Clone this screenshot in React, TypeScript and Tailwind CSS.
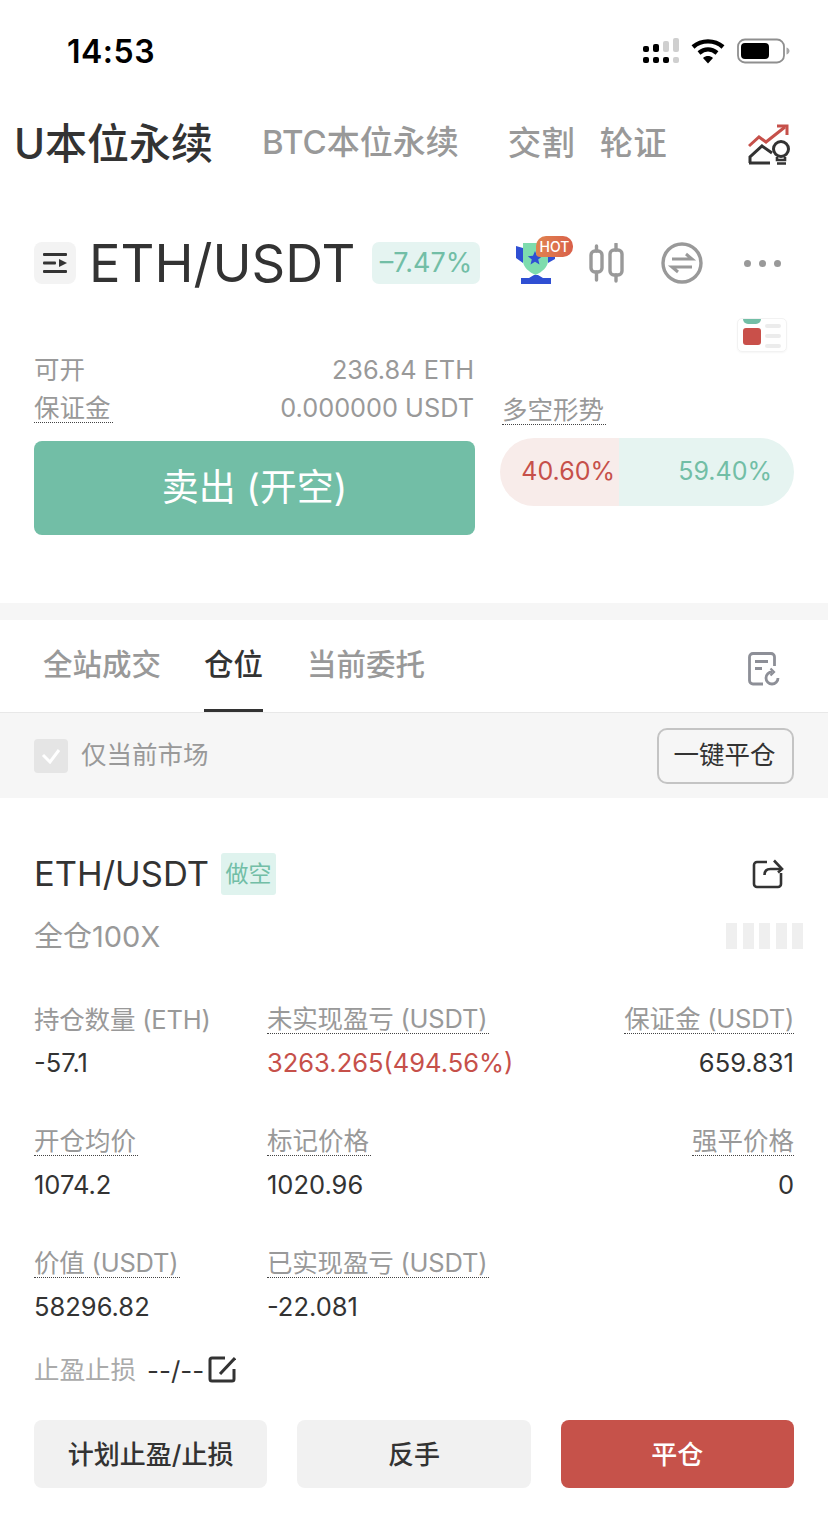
import React from "react";

const font = "font-['Inter','Noto_Sans_CJK_SC',sans-serif]";

function StatusIcons() {
  return (
    <div className="flex items-center">
      <svg width="36" height="26" viewBox="0 0 36 26">
        <g fill="#000">
          <rect x="0" y="8" width="6" height="6" rx="2" />
          <rect x="0" y="19" width="6" height="6" rx="2" />
          <rect x="10" y="6" width="6" height="8" rx="2" />
          <rect x="10" y="19" width="6" height="6" rx="2" />
          <rect x="20" y="19" width="6" height="6" rx="2" />
        </g>
        <g fill="#cfcfcf">
          <rect x="20" y="3" width="6" height="11" rx="2" />
          <rect x="30" y="0" width="6" height="14" rx="2" />
          <rect x="30" y="19" width="6" height="6" rx="2" />
        </g>
      </svg>
      <svg width="34" height="26" viewBox="0 0 34 26" className="ml-[12px]">
        <path d="M2 9C10.500 1.500 23.500 1.500 32 9" fill="none" stroke="#000" strokeWidth="4.400" />
        <path d="M8 15c5.500-4.600 12.500-4.600 18 0" fill="none" stroke="#000" strokeWidth="4.400" />
        <path d="M12 20c3.200-2.600 6.800-2.600 10 0l-5 5.500z" fill="#000" />
      </svg>
      <svg width="54" height="26" viewBox="0 0 54 26" className="ml-[12px]">
        <rect x="1" y="1.500" width="46" height="23" rx="7" fill="none" stroke="#8f8f8f" strokeWidth="1.800" />
        <rect x="4" y="5" width="28" height="16" rx="4" fill="#000" />
        <path d="M49.500 9.500c2 .6 3 2 3 3.500s-1 2.900-3 3.500z" fill="#a8a8a8" />
      </svg>
    </div>
  );
}

function IdeaIcon() {
  return (
    <svg width="46" height="42" viewBox="0 0 46 42" fill="none">
      <path d="M1 22 11 13l7 5L37 3" stroke="#c6504a" strokeWidth="3" />
      <path d="M29 2h10v9" stroke="#c6504a" strokeWidth="3" />
      <path d="M2 39v-6l12-11 10 7" stroke="#333" strokeWidth="3" />
      <path d="M1 39h21" stroke="#333" strokeWidth="3" />
      <circle cx="33" cy="25" r="7.500" stroke="#333" strokeWidth="3" />
      <path d="M29 33v3h8v-3M29 39.500h9" stroke="#333" strokeWidth="2.600" />
    </svg>
  );
}

function Trophy() {
  return (
    <div className="relative mt-[-6px] h-[48px] w-[60px] shrink-0">
      <svg width="40" height="48" viewBox="0 0 40 48" className="absolute left-0 top-0">
        <path d="M0 10l7 2v15l-7-5zM32 27l7-4v-5l-7 2z" fill="#2f4fd3" />
        <path d="M7 7h25v18c0 6-6 11-12.500 14C13 36 7 31 7 25z" fill="#7edcae" />
        <path d="M19 15l2 4.800 5.200.4-4 3.300 1.300 5-4.500-2.700-4.500 2.700 1.300-5-4-3.300 5.200-.4z" fill="#2f4fd3" />
        <path d="M5 48v-6h8l5-3h4l5 3h8v6z" fill="#2f4fd3" />
      </svg>
      <div className="absolute left-[20px] top-0 flex h-[21px] w-[37px] items-center justify-center rounded-tl-[10px] rounded-tr-[10px] rounded-br-[10px] rounded-bl-[4px] bg-gradient-to-r from-[#e0834f] to-[#d9604a] text-[14px] font-medium leading-none text-[#fff]">
        HOT
      </div>
    </div>
  );
}

function Candles() {
  return (
    <svg width="36" height="40" viewBox="0 0 36 40" fill="none" stroke="#999" strokeWidth="3.400" strokeLinecap="round">
      <rect x="2" y="8" width="11" height="21" rx="4" />
      <rect x="21" y="7" width="12" height="25" rx="4" />
      <path d="M7.500 3v5M7.500 29v8M27 1v6M27 32v6" />
    </svg>
  );
}

function SwapCircle() {
  return (
    <svg width="42" height="42" viewBox="0 0 42 42" fill="none" stroke="#999">
      <circle cx="21" cy="21" r="19" strokeWidth="3.400" />
      <path d="M11 17h20l-6-5" strokeWidth="3" />
      <path d="M31 25H11l6 5" strokeWidth="3" />
    </svg>
  );
}

function Dots() {
  return (
    <div className="flex items-center gap-[8px]">
      <span className="h-[7px] w-[7px] rounded-full bg-[#999]" />
      <span className="h-[7px] w-[7px] rounded-full bg-[#999]" />
      <span className="h-[7px] w-[7px] rounded-full bg-[#999]" />
    </div>
  );
}

function LayoutThumb() {
  return (
    <div className="flex h-[34px] w-[50px] gap-[4px] rounded-[5px] border border-[#f2f2f2] px-[5px] shadow-[0_1px_2px_rgba(0,0,0,0.04)]">
      <div className="flex w-[18px] flex-col gap-[4px]">
        <div className="h-[5px] rounded-b-[5px] bg-[#72bea6]" />
        <div className="h-[17px] rounded-[3px] bg-[#c9504a]" />
      </div>
      <div className="flex flex-1 flex-col gap-[6px] pt-[5px]">
        <div className="h-[4px] rounded-[2px] bg-[#ececec]" />
        <div className="h-[4px] rounded-[2px] bg-[#ececec]" />
        <div className="h-[4px] rounded-[2px] bg-[#ececec]" />
      </div>
    </div>
  );
}

function Dotted({ children, className = "" }: { children: React.ReactNode; className?: string }) {
  return <span className={"inline-block border-b border-dotted border-[#444] leading-[28px] " + className}>{children}</span>;
}

function OrdersIcon() {
  return (
    <svg width="32" height="34" viewBox="0 0 32 34" fill="none" stroke="#8d8f97" strokeWidth="2.800">
      <path d="M15 32H5a3.500 3.500 0 0 1-3.500-3.500V5A3.500 3.500 0 0 1 5 1.500h18A3.500 3.500 0 0 1 26.500 5v9" />
      <path d="M7 9.500h13M7 16.500h7" />
      <path d="M24 20a6 6 0 1 0 6 6" />
      <path d="M22.500 16.500l3.500 3.500-3.500 3.500" strokeWidth="2.200" />
    </svg>
  );
}

function ShareIcon() {
  return (
    <svg width="32" height="30" viewBox="0 0 32 30" fill="none" stroke="#333" strokeWidth="2.600">
      <path d="M15 3H5a3 3 0 0 0-3 3v19a3 3 0 0 0 3 3h21a3 3 0 0 0 3-3V14" />
      <path d="M12.500 16c0-3.500 2-6 6-6H29" />
      <path d="M22 1.500 30 10l-4 3.500" />
    </svg>
  );
}

function EditIcon() {
  return (
    <svg width="28" height="28" viewBox="0 0 28 28" fill="none" stroke="#333" strokeWidth="3">
      <path d="M17 3H4a2 2 0 0 0-2 2v19a2 2 0 0 0 2 2h20a2 2 0 0 0 2-2V14" />
      <path d="M12 19 27 3" />
    </svg>
  );
}

function Cell({ label, value, dotted = true, right = false, red = false, latin = false }: { label: string; value: string; dotted?: boolean; right?: boolean; red?: boolean; latin?: boolean }) {
  return (
    <div className={"flex h-[122px] flex-col " + (right ? "items-end" : "items-start")}>
      {dotted ? (
        <Dotted className={(latin ? "tracking-[-0.2px] " : "") + (right ? "" : "pr-[2px] ") + "text-[#999]"}>{label}</Dotted>
      ) : (
        <span className="tracking-[-0.2px] leading-[29px] text-[#999]">{label}</span>
      )}
      <span className={"mt-[15px] leading-[28px] " + (red ? "text-[#c6504a]" : "text-[#333]")}>{value}</span>
    </div>
  );
}

export default function App() {
  return (
    <div className={"flex h-[1519px] w-[828px] flex-col overflow-hidden bg-white " + font}>
      {/* status bar */}
      <div className="flex h-[101px] items-center justify-between pl-[67px] pr-[37px]">
        <span className="mt-[3px] text-[32px] font-semibold leading-none tracking-[0.5px] text-[#000]">14:53</span>
        <StatusIcons />
      </div>

      {/* top nav */}
      <div className="flex h-[84px] items-center pl-[14px] pr-[34px]">
        <span className="text-[42px] font-medium text-[#333]">U本位永续</span>
        <span className="ml-[49px] text-[33px] font-medium text-[#999]">BTC本位永续</span>
        <span className="ml-[49px] text-[33.500px] font-medium text-[#999]">交割</span>
        <span className="ml-[25px] text-[33.500px] font-medium text-[#999]">轮证</span>
        <div className="ml-auto mt-[4px]">
          <IdeaIcon />
        </div>
      </div>

      {/* symbol row */}
      <div className="mt-[57px] flex h-[42px] items-center pl-[34px]">
        <div className="flex h-[42px] w-[42px] items-center justify-center rounded-[8px] bg-[#f3f3f3]">
          <svg width="26" height="22" viewBox="0 0 26 22" fill="#333">
            <rect x="1" y="1" width="24" height="3" rx="1" />
            <rect x="1" y="9.500" width="13" height="3" rx="1" />
            <path d="M17 7l8 4-8 4z" />
            <rect x="1" y="18" width="24" height="3" rx="1" />
          </svg>
        </div>
        <span className="ml-[13px] w-[264px] text-[52.500px] font-normal leading-none text-[#333]">ETH/USDT</span>
        <div className="ml-[19px] flex h-[42px] w-[108px] items-center justify-center rounded-[7px] bg-[#e5f4f1] text-[27px] text-[#72bea6]">
          –7.47%
        </div>
        <div className="ml-[36px] flex items-center">
          <Trophy />
          <div className="ml-[13px]">
            <Candles />
          </div>
          <div className="ml-[36px]">
            <SwapCircle />
          </div>
          <div className="ml-[41px]">
            <Dots />
          </div>
        </div>
      </div>

      {/* trade section */}
      <div className="mt-[34px] flex justify-end pr-[41px]">
        <LayoutThumb />
      </div>
      <div className="flex h-[184px] px-[34px]">
        <div className="w-[441px]">
          <div className="flex h-[34px] items-end justify-between text-[25.500px] text-[#999]">
            <span className="leading-[32px]">可开</span>
            <span className="pr-[1px] text-[25.300px] leading-[32px]">236.84 ETH</span>
          </div>
          <div className="mt-[8px] flex h-[32px] items-start justify-between text-[25.500px] text-[#999]">
            <Dotted className="pr-[2px]">保证金</Dotted>
            <span className="pr-[1px] text-[25.300px] leading-[28px]">0.000000 USDT</span>
          </div>
          <div className="mt-[15px] flex h-[94px] items-center justify-center rounded-[8px] bg-[#72bea6] text-[37px] text-white">
            卖出 (开空)
          </div>
        </div>
        <div className="ml-[25px] flex flex-1 flex-col pt-[44px]">
          <div className="pl-[2px]">
            <Dotted className="pr-[2px] text-[25.500px] text-[#999]">多空形势</Dotted>
          </div>
          <div className="mt-[13px] flex h-[68px] items-center overflow-hidden rounded-full text-[25px]">
            <div className="flex h-full w-[119px] items-center justify-end bg-[#f8ecea] pr-[4px] text-[#c6504a]">40.60%</div>
            <div className="flex h-full flex-1 items-center justify-end bg-[#e6f4f1] pr-[22px] text-[#72bea6]">59.40%</div>
          </div>
        </div>
      </div>

      {/* divider band */}
      <div className="mt-[67px] h-[17px] bg-[#f6f6f6]" />

      {/* tabs */}
      <div className="flex h-[93px] items-start border-b border-[#e8e8e8] pl-[43px] pr-[48px] text-[29.500px] font-medium text-[#999]">
        <span className="mt-[24px] leading-[40px]">全站成交</span>
        <div className="ml-[43px] flex h-full flex-col justify-between text-[#333]">
          <span className="mt-[24px] leading-[40px]">仓位</span>
          <div className="h-[3px] bg-[#333]" />
        </div>
        <span className="ml-[44px] mt-[24px] leading-[40px]">当前委托</span>
        <div className="ml-auto mt-[32px]">
          <OrdersIcon />
        </div>
      </div>

      {/* filter */}
      <div className="flex h-[85px] items-center justify-between bg-[#f6f6f6] px-[34px]">
        <div className="flex items-center gap-[13px]">
          <div className="flex h-[34px] w-[34px] items-center justify-center rounded-[4px] bg-[#e5e5e5]">
            <svg width="20" height="16" viewBox="0 0 20 16" fill="none" stroke="#fff" strokeWidth="3">
              <path d="M2 7l7 7L18 2" />
            </svg>
          </div>
          <span className="text-[25.500px] text-[#999]">仅当前市场</span>
        </div>
        <div className="flex h-[56px] w-[137px] items-center justify-center rounded-[10px] border-2 border-[#c4c4c4] pr-[2px] text-[25.500px] text-[#333]">
          一键平仓
        </div>
      </div>

      {/* position */}
      <div className="flex flex-1 flex-col px-[34px]">
        <div className="mt-[55px] flex h-[42px] items-center">
          <span className="text-[34.500px] leading-none text-[#333]">ETH/USDT</span>
          <div className="ml-[12px] flex h-[42px] w-[55px] items-center justify-center rounded-[3px] bg-[#dff3ee] text-[23px] text-[#72bea6]">做空</div>
          <div className="ml-auto mr-[10px]">
            <ShareIcon />
          </div>
        </div>
        <div className="mt-[22px] flex h-[40px] items-center justify-between">
          <span className="text-[29px] text-[#999]">全仓100X</span>
          <div className="mr-[-9px] mt-[-2px] flex gap-[5.500px]">
            {[0, 1, 2, 3, 4].map((i) => (
              <div key={i} className="h-[26px] w-[11px] bg-[#efefef]" />
            ))}
          </div>
        </div>

        <div className="mt-[48px] grid grid-cols-[233px_1fr_auto] text-[25.500px]">
          <Cell label="持仓数量 (ETH)" value="-57.1" dotted={false} />
          <Cell label="未实现盈亏 (USDT)" value="3263.265(494.56%)" red latin />
          <Cell label="保证金 (USDT)" value="659.831" right latin />
          <Cell label="开仓均价" value="1074.2" />
          <Cell label="标记价格" value="1020.96" />
          <Cell label="强平价格" value="0" right />
          <Cell label="价值 (USDT)" value="58296.82" latin />
          <Cell label="已实现盈亏 (USDT)" value="-22.081" latin />
          <div />
        </div>

        <div className="mt-[-17px] flex h-[32px] items-center">
          <span className="text-[25.500px] text-[#aaa]">止盈止损</span>
          <span className="ml-[11px] text-[26px] text-[#333]">--/--</span>
          <div className="ml-[4px] mt-[-2px]">
            <EditIcon />
          </div>
        </div>

        <div className="mt-[34px] grid grid-cols-3 gap-[30px] text-[26px] font-medium">
          <div className="flex h-[68px] items-center justify-center rounded-[8px] bg-[#f1f1f1] text-[#333]">计划止盈/止损</div>
          <div className="flex h-[68px] items-center justify-center rounded-[8px] bg-[#f1f1f1] text-[#333]">反手</div>
          <div className="flex h-[68px] items-center justify-center rounded-[8px] bg-[#c6524a] text-white">平仓</div>
        </div>
      </div>
    </div>
  );
}
